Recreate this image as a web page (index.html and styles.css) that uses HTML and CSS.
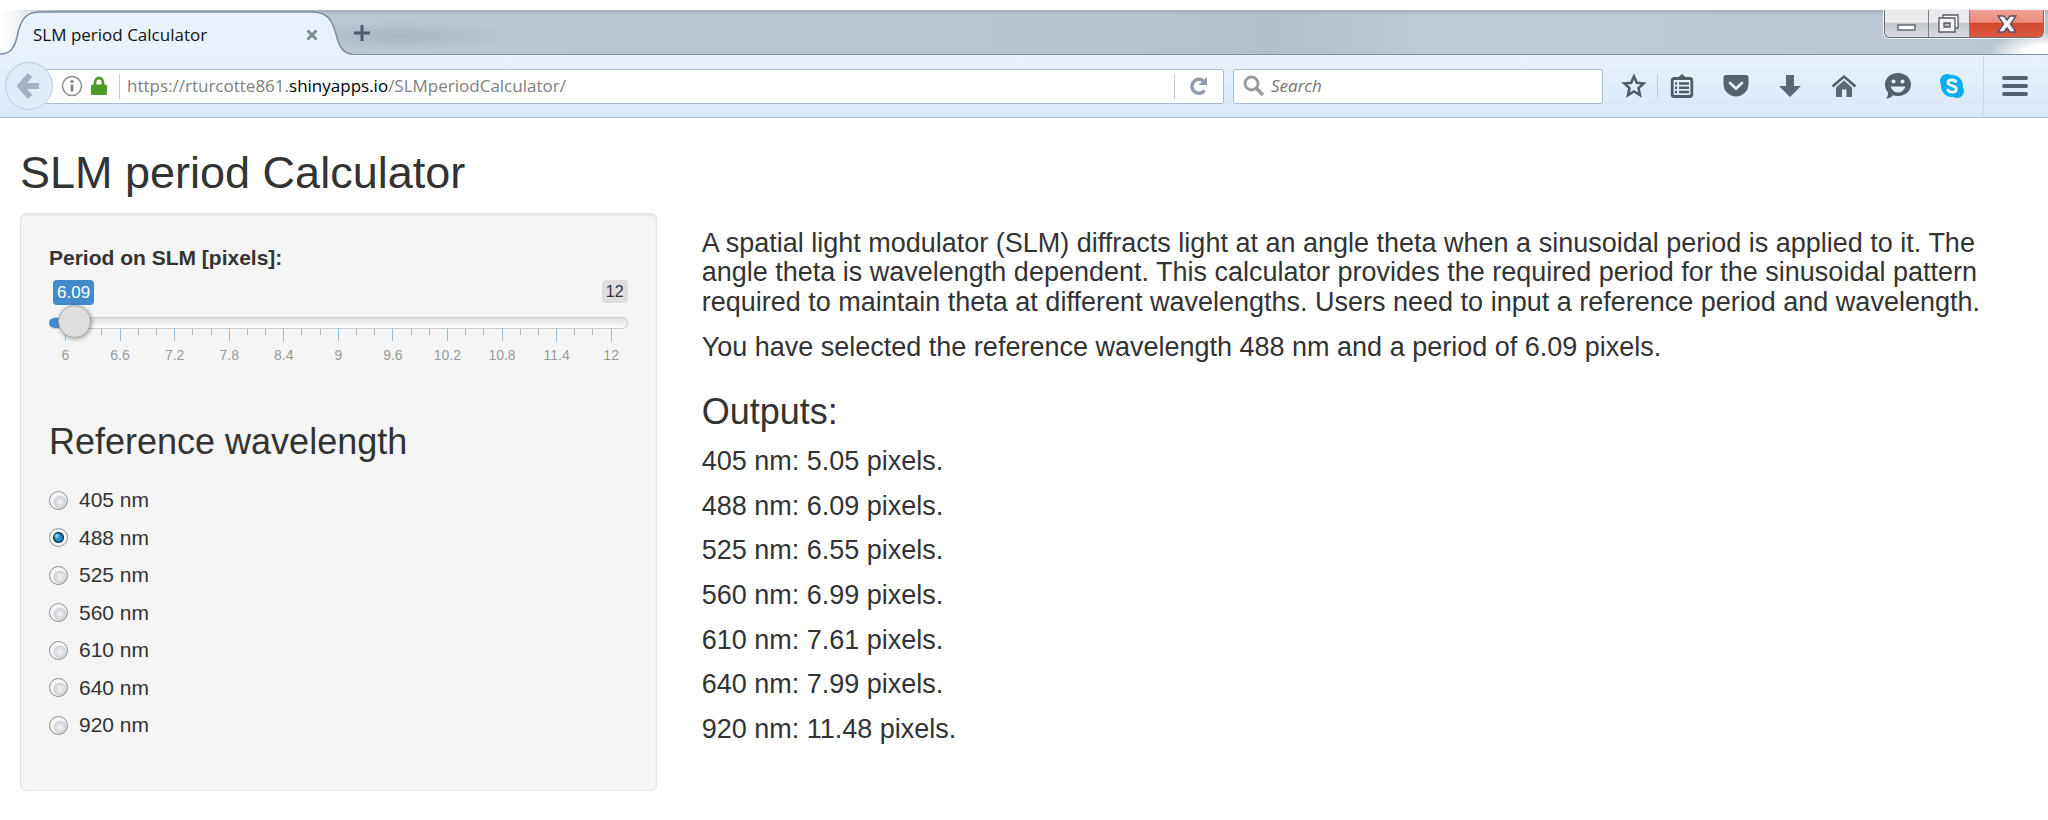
FILE: index.html
```html
<!DOCTYPE html>
<html lang="en">
<head>
<meta charset="utf-8">
<title>SLM period Calculator</title>
<link rel="stylesheet" href="styles.css">
</head>
<body>
<header class="browser">
  <div class="tabstrip">
    <div class="tab">
      <svg class="tab-shape" viewBox="0 0 352 45" width="352" height="45" aria-hidden="true">
        <path d="M0 44C10 44 14 39 17 27C20 11 25 2 39 2H312C327 2 332 9 336 24C339 38 344 44 352 44V45H0Z" fill="#e9f1fb"/>
        <path d="M0 44C10 44 14 39 17 27C20 11 25 2 39 2H312C327 2 332 9 336 24C339 38 344 44 352 44" fill="none" stroke="#7e8c9c" stroke-width="1.5"/>
      </svg>
      <span class="tab-title">SLM period Calculator</span>
      <button class="tab-close" aria-label="Close tab"><svg width="12" height="12" viewBox="0 0 12 12"><path d="M1.5 1.5L10.5 10.5M10.5 1.5L1.5 10.5" stroke="#7d8b99" stroke-width="3"/></svg></button>
    </div>
    <button class="new-tab" aria-label="New tab"><svg width="16" height="16" viewBox="0 0 16 16"><path d="M8 0V16M0 8H16" stroke="#4d5a68" stroke-width="3"/></svg></button>
    <div class="window-buttons">
      <button class="win win-min" aria-label="Minimize"><svg width="20" height="8" viewBox="0 0 20 8"><rect x="1" y="1" width="17" height="5" fill="#fff" stroke="#555868" stroke-width="1.3"/></svg></button>
      <button class="win win-restore" aria-label="Restore"><svg width="22" height="20" viewBox="0 0 22 20"><path d="M5 1H20V14H5Z" fill="#fff" stroke="#555868" stroke-width="1.3"/><path d="M1 4H17V18H1Z" fill="#f4f4f6" stroke="#555868" stroke-width="1.3"/><path d="M6 9H12V13H6Z" fill="#b8bcc8" stroke="#555868" stroke-width="1.3"/></svg></button>
      <button class="win win-close" aria-label="Close"><svg width="20" height="18" viewBox="0 0 20 18"><path d="M1 1H7L10 5L13 1H19L13.500 9L19 17H13L10 13L7 17H1L6.500 9Z" fill="#f6f6f6" stroke="#565064" stroke-width="1.4"/></svg></button>
    </div>
  </div>
  <nav class="toolbar">
    <button class="back" aria-label="Back"><svg width="24" height="28" viewBox="0 0 24 28"><path d="M13 3L3.500 14L13 25M4.500 14H22" fill="none" stroke="#a5b2bf" stroke-width="6"/></svg></button>
    <div class="urlbar">
      <svg width="22" height="22" viewBox="0 0 22 22" aria-hidden="true"><circle cx="11" cy="11" r="9.500" fill="none" stroke="#909090" stroke-width="1.500"/><circle cx="11" cy="6.500" r="1.600" fill="#808080"/><path d="M11 9.500V16.500" stroke="#808080" stroke-width="2.600"/></svg>
      <svg class="lock" width="16" height="20" viewBox="0 0 16 20" aria-hidden="true"><path d="M4 10V6.500A4 4.500 0 0 1 12 6.500V10" fill="none" stroke="#4d9a26" stroke-width="2.800"/><rect y="8.500" width="16" height="10.500" rx="1.500" fill="#4d9a26"/></svg>
      <span class="divider"></span>
      <a class="url" href="#">https://rturcotte861.<span class="domain">shinyapps.io</span>/SLMperiodCalculator/</a>
      <span class="divider"></span>
      <button class="reload" aria-label="Reload"><svg width="18" height="20" viewBox="0 0 18 20"><path d="M14.500 14.500A7 7 0 1 1 13.500 5" fill="none" stroke="#8f9ba8" stroke-width="3.400"/><path d="M17 1V9H8.500Z" fill="#8f9ba8"/></svg></button>
    </div>
    <div class="searchbar">
      <svg width="22" height="22" viewBox="0 0 22 22" aria-hidden="true"><circle cx="8.500" cy="8.500" r="6.500" fill="none" stroke="#999" stroke-width="2.800"/><path d="M13 13L20 20" stroke="#999" stroke-width="3.400"/></svg>
      <input class="search" type="text" placeholder="Search" aria-label="Search">
    </div>
    <button class="tool tool-star" aria-label="Bookmark"><svg width="26" height="26" viewBox="0 0 26 26"><path d="M13 3.500L15.800 9.800L22.600 10.500L17.500 15.100L19 22L13 18.400L7 22L8.500 15.100L3.400 10.500L10.200 9.800Z" fill="none" stroke="#4f5b67" stroke-width="2.600"/></svg></button>
    <span class="divider"></span>
    <button class="tool tool-list" aria-label="Bookmarks list"><svg width="24" height="26" viewBox="0 0 24 26"><path d="M8 5L12 1.500L16 5Z" fill="#4f5b67" stroke="#4f5b67"/><rect x="2.200" y="5.500" width="19.600" height="18" rx="2" fill="none" stroke="#4f5b67" stroke-width="2.800"/><path d="M5 10.500H7M5 14.700H7M5 19H7M9 10.500H19M9 14.700H19M9 19H19" stroke="#4f5b67" stroke-width="2.400"/></svg></button>
    <button class="tool" aria-label="Pocket"><svg width="26" height="24" viewBox="0 0 26 24"><path d="M3 1H23Q25.500 1 25.500 3.500V10A12.500 12.500 0 0 1 .5 10V3.500Q.5 1 3 1Z" fill="#55616d"/><path d="M7 9L13 14.500L19 9" fill="none" stroke="#e5eff9" stroke-width="2.800" stroke-linecap="round"/></svg></button>
    <button class="tool" aria-label="Downloads"><svg width="24" height="24" viewBox="0 0 24 24"><path d="M8 1H16V12H23L12 23L1 12H8Z" fill="#5b6773"/></svg></button>
    <button class="tool" aria-label="Home"><svg width="26" height="24" viewBox="0 0 26 24"><path d="M1.500 12.500L13 2.500L24.500 12.500" fill="none" stroke="#4f5b67" stroke-width="2.400"/><path d="M5 13.500L13 6.500L21 13.500V23H15.500V15.500H11V23H5Z" fill="#5b6773"/></svg></button>
    <button class="tool" aria-label="Chat"><svg width="28" height="28" viewBox="0 0 28 28"><path d="M14 1C21.500 1 27 6 27 12.500S21.500 24 14 24C12 24 10.500 23.700 9 23.200Q7 26 2 26.500Q4.500 23.500 4 20.500C2 18.500 1 15.500 1 12.500C1 6 6.500 1 14 1Z" fill="#55616d"/><circle cx="9.500" cy="9.500" r="2" fill="#e5eff9"/><circle cx="18.500" cy="9.500" r="2" fill="#e5eff9"/><path d="M6.500 14.500H21.500Q19 20.500 14 20.500T6.500 14.500Z" fill="#e5eff9"/></svg></button>
    <button class="tool" aria-label="Skype"><svg width="26" height="26" viewBox="0 0 26 26"><circle cx="8" cy="8" r="7" fill="#00aff0"/><circle cx="18" cy="18" r="7" fill="#00aff0"/><circle cx="13" cy="13" r="11" fill="#00aff0"/><path d="M17.500 9.500Q16 7 13 7C10.500 7 9 8.200 9 9.800C9 13.500 17.300 11.500 17.300 16C17.300 18 15.500 19.200 13 19.200Q9.500 19.200 8.300 16" fill="none" stroke="#fff" stroke-width="2.800"/></svg></button>
    <span class="divider divider-tall"></span>
    <button class="tool" aria-label="Menu"><svg width="26" height="22" viewBox="0 0 26 22"><path d="M2 3H24M2 11H24M2 19H24" stroke="#56626f" stroke-width="4" stroke-linecap="round"/></svg></button>
  </nav>
</header>
<main class="page">
  <h1 class="title">SLM period Calculator</h1>
  <div class="row">
    <form class="well">
      <label class="slider-label" for="period">Period on SLM [pixels]:</label>
      <div class="slider">
        <div class="slider-badges"><output class="badge-value" for="period">6.09</output><span class="badge-max">12</span></div>
        <input class="range" id="period" type="range" min="6" max="12" step="0.01" value="6.09">
        <div class="ticks">
          <span class="tick major"><b>6</b></span><span class="tick"></span><span class="tick"></span>
          <span class="tick major"><b>6.6</b></span><span class="tick"></span><span class="tick"></span>
          <span class="tick major"><b>7.2</b></span><span class="tick"></span><span class="tick"></span>
          <span class="tick major"><b>7.8</b></span><span class="tick"></span><span class="tick"></span>
          <span class="tick major"><b>8.4</b></span><span class="tick"></span><span class="tick"></span>
          <span class="tick major"><b>9</b></span><span class="tick"></span><span class="tick"></span>
          <span class="tick major"><b>9.6</b></span><span class="tick"></span><span class="tick"></span>
          <span class="tick major"><b>10.2</b></span><span class="tick"></span><span class="tick"></span>
          <span class="tick major"><b>10.8</b></span><span class="tick"></span><span class="tick"></span>
          <span class="tick major"><b>11.4</b></span><span class="tick"></span><span class="tick"></span>
          <span class="tick major"><b>12</b></span>
        </div>
      </div>
      <h3 class="subhead" id="wavelength">Reference wavelength</h3>
      <div class="radios" role="radiogroup" aria-labelledby="wavelength">
        <label class="radio"><input type="radio" name="wl">405 nm</label>
        <label class="radio"><input type="radio" name="wl" checked>488 nm</label>
        <label class="radio"><input type="radio" name="wl">525 nm</label>
        <label class="radio"><input type="radio" name="wl">560 nm</label>
        <label class="radio"><input type="radio" name="wl">610 nm</label>
        <label class="radio"><input type="radio" name="wl">640 nm</label>
        <label class="radio"><input type="radio" name="wl">920 nm</label>
      </div>
    </form>
    <section class="content">
      <h4 class="text">A spatial light modulator (SLM) diffracts light at an angle theta when a sinusoidal period is applied to it. The angle theta is wavelength dependent. This calculator provides the required period for the sinusoidal pattern required to maintain theta at different wavelengths. Users need to input a reference period and wavelength.</h4>
      <h4 class="text">You have selected the reference wavelength 488 nm and a period of 6.09 pixels.</h4>
      <h3 class="subhead">Outputs:</h3>
      <h4 class="text">405 nm: 5.05 pixels.</h4>
      <h4 class="text">488 nm: 6.09 pixels.</h4>
      <h4 class="text">525 nm: 6.55 pixels.</h4>
      <h4 class="text">560 nm: 6.99 pixels.</h4>
      <h4 class="text">610 nm: 7.61 pixels.</h4>
      <h4 class="text">640 nm: 7.99 pixels.</h4>
      <h4 class="text">920 nm: 11.48 pixels.</h4>
    </section>
  </div>
</main>
</body>
</html>
```
FILE: styles.css
```css
* { box-sizing: border-box; }
body {
  margin: 0;
  background: #fff;
  color: #333;
  font: 21px/30px "Liberation Sans", Arial, sans-serif;
}
button { border: 0; padding: 0; background: none; display: flex; align-items: center; justify-content: center; }
svg { display: block; flex: none; }

/* Browser chrome */
.browser { padding-top: 10px; font-family: "Open Sans", "Noto Sans", sans-serif; }
.tabstrip {
  display: flex;
  height: 45px;
  border-bottom: 1px solid #7f8fa2;
  background:
    radial-gradient(ellipse 60px 22px at 100% 100%, #fff 40%, transparent),
    radial-gradient(ellipse 110px 14px at 400px 26px, #a9b5c1, transparent),
    linear-gradient(90deg, #fff 0, #f4f5f6 14px, transparent 60px),
    linear-gradient(#a3afbb, transparent 5px),
    linear-gradient(90deg, #bcc8d4, #b9c4d0 55%, #b4bfcc 62%, #bfcad6 70%, #bbc6d2);
}
.tab { position: relative; display: flex; align-items: center; width: 352px; height: 45px; padding: 4px 34px 0 33px; }
.tab-shape { position: absolute; left: 0; top: 0; }
.tab-title { position: relative; flex: 1; color: #111; font-size: 17px; line-height: 24px; }
.tab-close { position: relative; width: 12px; height: 12px; }
.new-tab { width: 20px; height: 46px; }
.window-buttons {
  display: flex;
  height: 28px;
  margin: 0 4px 0 auto;
  border: 1px solid #6b6f7a;
  border-top: 0;
  border-radius: 0 0 6px 6px;
  overflow: hidden;
  box-shadow: 0 0 0 1px #eef1f4;
}
.win { background: linear-gradient(#e9ebed 45%, #c3c6cb 50%, #d9dbdf); border-right: 1px solid #7d818c; }
.win-min { width: 44px; padding-top: 8px; }
.win-restore { width: 41px; }
.win-close { width: 73px; border-right: 0; background: linear-gradient(#f0a294, #e98c7c 45%, #d24a2e 50%, #db5a3f); }

.toolbar {
  display: flex;
  align-items: center;
  height: 63px;
  padding: 0 6px 0 5px;
  border-bottom: 1px solid #a8bdd3;
  background: linear-gradient(#e9f2fc, #d9e8f7);
}
.back {
  z-index: 1;
  width: 48px;
  height: 48px;
  border: 1px solid #b9cada;
  border-radius: 50%;
  background: #dfebf7;
}
.urlbar, .searchbar { display: flex; align-items: center; height: 35px; border: 1px solid #a9bdd3; border-radius: 2px; background: #fff; }
.urlbar { flex: 1; margin-left: -8px; padding: 0 15px 0 15px; }
.lock { margin: 0 12px 0 8px; }
.divider { width: 1px; height: 25px; background: #c4ccd5; }
.divider-tall { height: 60px; margin: 0 4px; background: #cbd8e5; }
.url { flex: 1; padding-left: 7px; color: #808080; font-size: 17px; line-height: 26px; text-decoration: none; }
.domain { color: #000; }
.reload { padding-left: 15px; }
.searchbar { width: 370px; margin: 0 7px 0 9px; padding-left: 9px; }
.search { flex: 1; min-width: 0; border: 0; padding: 0 6px; background: none; outline: 0; font: italic 17px/26px "Open Sans", "Noto Sans", sans-serif; }
.search::placeholder { color: #757575; opacity: 1; }
.tool { width: 54px; height: 48px; }
.tool-star { width: 47px; }
.tool-list { width: 47px; margin-right: 4px; }

/* Page */
.page { padding: 30px 25px 28px 20px; }
h1, h3, h4 { margin: 0; font-weight: 400; line-height: 1.1; }
.title { font-size: 45px; }
.row { display: flex; align-items: flex-start; gap: 45px; margin-top: 15px; }
.well {
  width: calc(33.333% - 31px);
  padding: 29px 28px 50px;
  border: 1px solid #e3e3e3;
  border-radius: 6px;
  background: #f5f5f5;
  box-shadow: inset 0 2px 2px rgba(0, 0, 0, .05);
}
.slider-label { display: block; font-weight: 700; }
.slider { margin-top: 7px; }
.slider-badges { display: flex; justify-content: space-between; align-items: flex-start; height: 37px; padding-left: 4px; }
.badge-value, .badge-max { padding: 0 4px; border-radius: 4px; }
.badge-value { background: #428bca; color: #fff; font-size: 17px; line-height: 25px; }
.badge-max { background: #dddddd; font-size: 16px; line-height: 23px; }
.range {
  position: relative;
  z-index: 1;
  display: block;
  appearance: none;
  width: 100%;
  height: 12px;
  margin: 0;
  border-radius: 6px;
  background: linear-gradient(90deg, #428bca 24px, transparent 24px), linear-gradient(#dedede, #fff);
  border: 1px solid #ccc;
  border-left-color: #428bca;
}
.range::-webkit-slider-runnable-track { height: 10px; }
.range::-webkit-slider-thumb {
  appearance: none;
  width: 33px;
  height: 33px;
  margin-top: -13px;
  border: 1px solid #aaa;
  border-radius: 50%;
  background: #dedede;
  box-shadow: 1px 1px 4px rgba(0, 0, 0, .35);
}
.ticks { display: flex; justify-content: space-between; height: 41px; padding: 0 16px; }
.tick { display: flex; flex-direction: column; align-items: center; width: 1px; }
.tick::before { content: ""; flex: none; width: 1px; height: 6px; background: #b5b5b5; }
.tick.major::before { height: 12px; background: #92bbe0; }
.tick b { margin-top: 4px; color: #999; font-size: 14px; font-weight: 400; line-height: 20px; }
.subhead { font-size: 36px; }
.well .subhead { margin-top: 52px; }
.radios { display: flex; flex-direction: column; justify-content: space-between; min-height: 255px; margin-top: 24px; }
.radio { display: flex; align-items: center; gap: 11px; }
.radio input {
  appearance: none;
  width: 19px;
  height: 19px;
  margin: 0;
  border: 1px solid #8e8f8f;
  border-radius: 50%;
  background: radial-gradient(circle at 60% 60%, #f3f3f3, #cfd3d8 6px, #f6f6f6 7px);
}
.radio input:checked { background: radial-gradient(circle at 40% 40%, #b8ecff, transparent 3px), radial-gradient(circle, #1e94cd 3px, #14304d 5px, #f6f6f6 6px); }
.content { flex: 1; padding-top: 16px; }
.text { margin-bottom: 15px; font-size: 27px; }
.content .subhead { margin: 30px 0 15px; }
```
